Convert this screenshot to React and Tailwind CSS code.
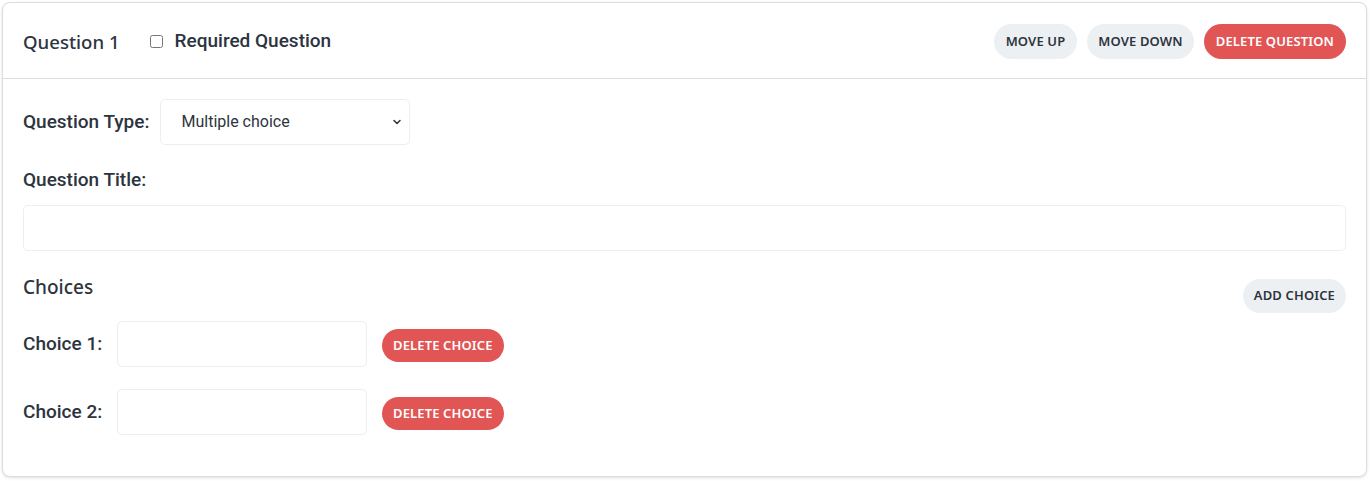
import React from "react";

const headFont = { fontFamily: '"Noto Sans", "Open Sans", sans-serif' };

const pill =
  "rounded-full px-[11px] h-[35px] text-[13px] font-semibold tracking-[0.01em] uppercase";

const App = () => {
  return (
    <div className="min-h-screen bg-white p-[2px] font-['Roboto',sans-serif] text-[#2d3440]">
      <div className="w-[1365px] h-[475px] rounded-[8px] border border-[#dcdde3] bg-white shadow-[0_1px_3px_rgba(0,0,0,0.12)]">
        <div className="h-[76px] border-b border-[#dcdde3] px-5 flex items-center justify-between">
          <div className="flex items-center pt-[2px]">
            <span style={headFont} className="text-[18.6px] font-medium text-[#2d3440]">
              Question 1
            </span>
            <label className="flex items-center ml-[30px] text-[19px] font-medium">
              <input type="checkbox" className="w-[13px] h-[13px] mr-[12px]" />
              Required Question
            </label>
          </div>
          <div style={headFont} className="flex items-center gap-[10px] pt-[2px]">
            <button className={pill + " bg-[#edf0f3] text-[#2d3440] !px-[12px]"}>Move Up</button>
            <button className={pill + " bg-[#edf0f3] text-[#2d3440]"}>Move Down</button>
            <button className={pill + " bg-[#e25555] text-white !px-[12px]"}>Delete Question</button>
          </div>
        </div>

        <div className="px-5 pt-5">
          <div className="flex items-center">
            <span className="text-[19px] font-medium">Question Type:</span>
            <div className="ml-[11px] w-[250px] h-[46px] border border-[#eceef1] rounded-[5px] flex items-center justify-between pl-5 pr-[6px] text-[16px]">
              <span>Multiple choice</span>
              <svg width="12" height="12" viewBox="0 0 24 24" fill="none" stroke="#2d3440" strokeWidth="3" strokeLinecap="round" strokeLinejoin="round">
                <path d="M6 9l6 6 6-6" />
              </svg>
            </div>
          </div>

          <div className="mt-[23px] text-[19px] font-medium leading-[24px]">Question Title:</div>
          <div className="mt-[13px] h-[46px] border border-[#eceef1] rounded-[5px]" />

          <div className="mt-[20px] flex items-start justify-between">
            <span style={headFont} className="pt-[2px] text-[19px] font-medium">Choices</span>
            <button
              style={headFont}
              className={pill + " mt-[8px] bg-[#edf0f3] text-[#2d3440] !h-[34px]"}
            >
              Add Choice
            </button>
          </div>

          <div className="mt-[8px] flex flex-col gap-[22px]">
            {[1, 2].map((n) => (
              <div key={n} className="flex items-center">
                <span className="w-[94px] text-[19px] font-medium">Choice {n}:</span>
                <div className="w-[250px] h-[46px] border border-[#eceef1] rounded-[5px]" />
                <button
                  style={headFont}
                  className={pill + " ml-[15px] mt-[3px] bg-[#e25555] text-white !h-[33px]"}
                >
                  Delete Choice
                </button>
              </div>
            ))}
          </div>
        </div>
      </div>
    </div>
  );
};

export default App;
